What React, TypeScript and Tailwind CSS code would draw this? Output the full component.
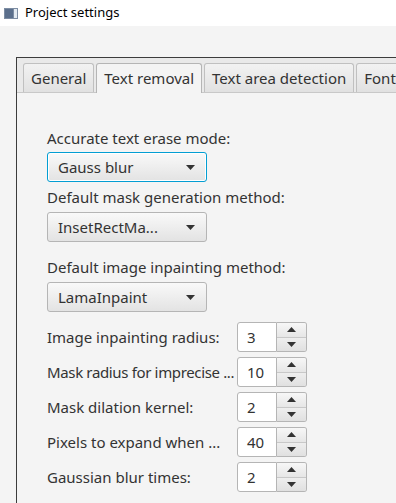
import React from "react";

const font = { fontFamily: '"Noto Sans", "Open Sans", sans-serif' };

function Arrow({ up = false }: { up?: boolean }) {
  return (
    <svg width="9" height="5" viewBox="0 0 9 5" className="block">
      {up ? (
        <polygon points="0,5 9,5 4.5,0" fill="#333" />
      ) : (
        <polygon points="0,0 9,0 4.5,5" fill="#333" />
      )}
    </svg>
  );
}

function Combo({ value, focused = false }: { value: string; focused?: boolean }) {
  return (
    <div
      className={
        "w-[160px] h-[30px] rounded-[3px] flex items-center justify-between pl-[10px] pr-[11px] bg-gradient-to-b from-[#f9f9f9] to-[#e3e3e3] text-[15px] text-[#333] " +
        (focused
          ? "border border-[#039ed3] shadow-[inset_0_0_0_1px_#ffffff]"
          : "border border-[#b5b5b5]")
      }
    >
      <span className="whitespace-nowrap">{value}</span>
      <Arrow />
    </div>
  );
}

function Spinner({ label, value, tight = false }: { label: string; value: string; tight?: boolean }) {
  return (
    <div className="flex items-center h-[30px]">
      <span
        className={
          "w-[190px] whitespace-nowrap text-[15px] text-[#333] " +
          (tight ? "tracking-[-0.35px]" : "")
        }
      >
        {label}
      </span>
      <div className="flex h-[30px]">
        <div className="w-[40px] h-full bg-white border border-[#b5b5b5] rounded-l-[3px] flex items-center pl-[9px] text-[15px] text-[#333]">
          {value}
        </div>
        <div className="w-[30px] h-full flex flex-col border border-l-0 border-[#b5b5b5] rounded-r-[3px] overflow-hidden">
          <div className="flex-1 flex items-center justify-center bg-gradient-to-b from-[#f7f7f7] to-[#e6e6e6] border-b border-[#c8c8c8]">
            <Arrow up />
          </div>
          <div className="flex-1 flex items-center justify-center bg-gradient-to-b from-[#eeeeee] to-[#e0e0e0]">
            <Arrow />
          </div>
        </div>
      </div>
    </div>
  );
}

function Tab({ label, selected = false }: { label: string; selected?: boolean }) {
  return selected ? (
    <div className="h-[30px] px-[7px] flex items-center bg-[#f4f4f4] border border-b-0 border-[#b5b5b5] rounded-t-[3px] text-[15px] text-[#333] whitespace-nowrap -mb-px relative">
      {label}
    </div>
  ) : (
    <div className="h-[29px] px-[7px] flex items-center bg-gradient-to-b from-[#f2f2f2] to-[#e1e1e1] border border-b-0 border-[#c0c0c0] rounded-t-[3px] text-[15px] text-[#333] whitespace-nowrap">
      {label}
    </div>
  );
}

export default function App() {
  return (
    <div className="w-[396px] h-[503px] overflow-hidden bg-[#f4f4f4]" style={font}>
      {/* Window title */}
      <div className="h-[26px] bg-white flex items-center pl-[4px] gap-[7px]">
        <svg width="14" height="11" viewBox="0 0 14 11">
          <rect x="0" y="0" width="14" height="11" fill="#7d8da3" />
          <rect x="1" y="1" width="8" height="9" fill="#5b6f8c" />
          <rect x="10" y="1" width="3" height="9" fill="#e3eaf1" />
        </svg>
        <span className="text-[13px] text-black">Project settings</span>
      </div>

      {/* Tab pane */}
      <div className="ml-[16px] mt-[31px] border-l border-t border-[#3c3c3c] h-[460px]">
        <div className="h-[35px] bg-[#e9e9e9] flex items-end gap-[2px] pl-[6px] border-b border-[#c8c8c8]">
          <Tab label="General" />
          <Tab label="Text removal" selected />
          <Tab label="Text area detection" />
          <Tab label="Font" />
        </div>

        <div className="pl-[30px] pt-[35px] flex flex-col">
          <span className="h-[20px] leading-[20px] text-[15px] text-[#333]">Accurate text erase mode:</span>
          <div className="mt-[4px]">
            <Combo value="Gauss blur" focused />
          </div>
          <span className="mt-[5px] h-[20px] leading-[20px] text-[15px] text-[#333]">Default mask generation method:</span>
          <div className="mt-[5px]">
            <Combo value="InsetRectMa..." />
          </div>
          <span className="mt-[15px] h-[20px] leading-[20px] text-[15px] text-[#333]">Default image inpainting method:</span>
          <div className="mt-[5px]">
            <Combo value="LamaInpaint" />
          </div>
          <div className="mt-[10px] flex flex-col gap-[5px]">
            <Spinner label="Image inpainting radius:" value="3" />
            <Spinner label="Mask radius for imprecise ..." value="10" tight />
            <Spinner label="Mask dilation kernel:" value="2" />
            <Spinner label="Pixels to expand when ..." value="40" />
            <Spinner label="Gaussian blur times:" value="2" />
          </div>
        </div>
      </div>
    </div>
  );
}
